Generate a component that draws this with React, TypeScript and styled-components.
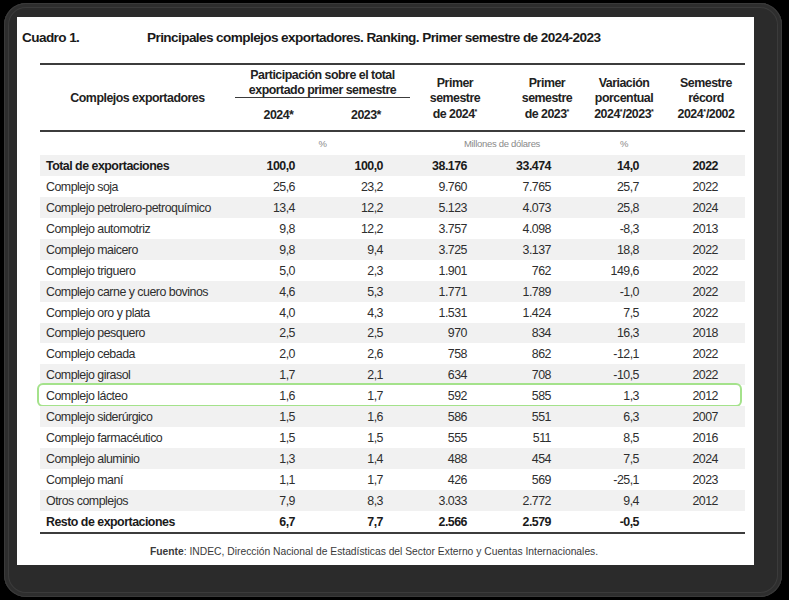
import React from "react";
import styled, { createGlobalStyle, css } from "styled-components";

const Global = createGlobalStyle`
  html, body { margin: 0; padding: 0; background: #000; }
  body { width: 789px; height: 600px; overflow: hidden; }
`;

const SANS = `"Liberation Sans", Arial, Helvetica, sans-serif`;
const COLS = "195px 87px 88px 90px 94px 60px 91px";

const Frame = styled.div`
  margin: 3px 0 0 4px;
  width: 778px;
  height: 594px;
  box-sizing: border-box;
  background: #2b2b2b;
  border-radius: 22px;
  box-shadow: inset 0 0 0 1px #3a3a3a, inset 0 0 0 4px #2e2e2e, inset 0 0 0 5px #3b3b3b;
  padding: 14px 0 0 13px;
`;

const Panel = styled.div`
  width: 737px;
  height: 548px;
  background: #fff;
  box-sizing: border-box;
  padding: 11px 9px 0 23px;
  font-family: ${SANS};
  color: #2a2a2a;
`;

const TitleRow = styled.div`
  display: flex;
  align-items: center;
  height: 18px;
  margin-left: -18px;
  font-size: 13.6px;
  letter-spacing: -0.6px;
  font-weight: 700;
  color: #1a1a1a;
`;

const TitleLabel = styled.span`
  width: 125px;
`;

const Table = styled.div`
  margin-top: 17px;
  width: 705px;
  border-top: 2px solid #3c3c3c;
  border-bottom: 2px solid #3c3c3c;
`;

const Head = styled.div`
  display: grid;
  grid-template-columns: ${COLS};
  grid-template-rows: 33px 32px;
  border-bottom: 2px solid #3c3c3c;
  font-size: 12.4px;
  letter-spacing: -0.5px;
  font-weight: 700;
  color: #222;
  line-height: 15.5px;
`;

const HeadCell = styled.div<{ $col: number; $row?: string; $span?: number; $shift?: number; $rule?: boolean }>`
  grid-column: ${(p) => p.$col} / span ${(p) => p.$span ?? 1};
  grid-row: ${(p) => p.$row ?? "1 / span 2"};
  display: flex;
  align-items: center;
  justify-content: center;
  padding-left: ${(p) => p.$shift ?? 0}px;
  padding-top: 3px;
  ${(p) =>
    p.$rule &&
    css`
      border-bottom: 1.5px solid #3c3c3c;
      padding-top: 4px;
    `}
`;

const HeadText = styled.div`
  text-align: center;
  white-space: nowrap;
  sup {
    font-size: 7px;
    line-height: 0;
    vertical-align: 4px;
    letter-spacing: 0;
  }
`;

const Units = styled.div`
  display: grid;
  grid-template-columns: ${COLS};
  height: 23px;
  align-items: center;
  font-size: 9.5px;
  letter-spacing: -0.3px;
  color: #8a8a8a;
`;

const UnitCell = styled.div<{ $col: number; $span?: number }>`
  grid-column: ${(p) => p.$col} / span ${(p) => p.$span ?? 1};
  text-align: center;
`;

const Row = styled.div<{ $shade: boolean; $bold?: boolean; $mark?: boolean }>`
  position: relative;
  display: grid;
  grid-template-columns: ${COLS};
  align-items: center;
  height: 20.95px;
  padding-top: 1px;
  box-sizing: border-box;
  font-size: 12.4px;
  letter-spacing: -0.5px;
  color: #2e2e2e;
  background: ${(p) => (p.$shade ? "#f1f1f1" : "#fff")};
  font-weight: ${(p) => (p.$bold ? 700 : 400)};
  ${(p) => p.$bold && css`color: #1a1a1a;`}
  ${(p) =>
    p.$mark &&
    css`
      &::after {
        content: "";
        position: absolute;
        left: -3px;
        right: 3px;
        top: -2px;
        bottom: -1px;
        border: 2px solid #a4e28b;
        border-radius: 6px;
        pointer-events: none;
      }
    `}
`;

const Name = styled.div`
  padding-left: 6px;
  white-space: nowrap;
`;

const Num = styled.div<{ $pr: number }>`
  text-align: right;
  padding-right: ${(p) => p.$pr}px;
  white-space: nowrap;
`;

const Footer = styled.div`
  margin-top: 12px;
  padding-left: 110px;
  font-size: 10.3px;
  color: #3a3a3a;
  b { font-weight: 700; }
`;

type R = [string, string, string, string, string, string, string, boolean?];

const rows: R[] = [
  ["Total de exportaciones", "100,0", "100,0", "38.176", "33.474", "14,0", "2022", true],
  ["Complejo soja", "25,6", "23,2", "9.760", "7.765", "25,7", "2022"],
  ["Complejo petrolero-petroquímico", "13,4", "12,2", "5.123", "4.073", "25,8", "2024"],
  ["Complejo automotriz", "9,8", "12,2", "3.757", "4.098", "-8,3", "2013"],
  ["Complejo maicero", "9,8", "9,4", "3.725", "3.137", "18,8", "2022"],
  ["Complejo triguero", "5,0", "2,3", "1.901", "762", "149,6", "2022"],
  ["Complejo carne y cuero bovinos", "4,6", "5,3", "1.771", "1.789", "-1,0", "2022"],
  ["Complejo oro y plata", "4,0", "4,3", "1.531", "1.424", "7,5", "2022"],
  ["Complejo pesquero", "2,5", "2,5", "970", "834", "16,3", "2018"],
  ["Complejo cebada", "2,0", "2,6", "758", "862", "-12,1", "2022"],
  ["Complejo girasol", "1,7", "2,1", "634", "708", "-10,5", "2022"],
  ["Complejo lácteo", "1,6", "1,7", "592", "585", "1,3", "2012"],
  ["Complejo siderúrgico", "1,5", "1,6", "586", "551", "6,3", "2007"],
  ["Complejo farmacéutico", "1,5", "1,5", "555", "511", "8,5", "2016"],
  ["Complejo aluminio", "1,3", "1,4", "488", "454", "7,5", "2024"],
  ["Complejo maní", "1,1", "1,7", "426", "569", "-25,1", "2023"],
  ["Otros complejos", "7,9", "8,3", "3.033", "2.772", "9,4", "2012"],
  ["Resto de exportaciones", "6,7", "7,7", "2.566", "2.579", "-0,5", "", true],
];

const PADS = [27, 27, 33, 43, 15, 27];

export default function App() {
  return (
    <>
      <Global />
      <Frame>
        <Panel>
          <TitleRow>
            <TitleLabel>Cuadro 1.</TitleLabel>
            <span>Principales complejos exportadores. Ranking. Primer semestre de 2024-2023</span>
          </TitleRow>
          <Table>
            <Head>
              <HeadCell $col={1} $shift={-2}>
                <HeadText>Complejos exportadores</HeadText>
              </HeadCell>
              <HeadCell $col={2} $span={2} $row="1" $rule>
                <HeadText>
                  Participación sobre el total
                  <br />
                  exportado primer semestre
                </HeadText>
              </HeadCell>
              <HeadCell $col={2} $row="2" $shift={-6}>
                <HeadText>2024*</HeadText>
              </HeadCell>
              <HeadCell $col={3} $row="2">
                <HeadText>2023*</HeadText>
              </HeadCell>
              <HeadCell $col={4}>
                <HeadText>
                  Primer
                  <br />
                  semestre
                  <br />
                  de 2024<sup>*</sup>
                </HeadText>
              </HeadCell>
              <HeadCell $col={5}>
                <HeadText>
                  Primer
                  <br />
                  semestre
                  <br />
                  de 2023<sup>*</sup>
                </HeadText>
              </HeadCell>
              <HeadCell $col={6}>
                <HeadText>
                  Variación
                  <br />
                  porcentual
                  <br />
                  2024<sup>*</sup>/2023<sup>*</sup>
                </HeadText>
              </HeadCell>
              <HeadCell $col={7} $shift={13}>
                <HeadText>
                  Semestre
                  <br />
                  récord
                  <br />
                  2024<sup>*</sup>/2002
                </HeadText>
              </HeadCell>
            </Head>
            <Units>
              <UnitCell $col={2} $span={2}>%</UnitCell>
              <UnitCell $col={4} $span={2}>Millones de dólares</UnitCell>
              <UnitCell $col={6}>%</UnitCell>
            </Units>
            {rows.map((r, i) => (
              <Row key={r[0]} $shade={i % 2 === 0} $bold={r[7]} $mark={r[0] === "Complejo lácteo"}>
                <Name>{r[0]}</Name>
                {r.slice(1, 7).map((v, j) => (
                  <Num key={j} $pr={PADS[j]}>
                    {v as string}
                  </Num>
                ))}
              </Row>
            ))}
          </Table>
          <Footer>
            <b>Fuente</b>: INDEC, Dirección Nacional de Estadísticas del Sector Externo y Cuentas Internacionales.
          </Footer>
        </Panel>
      </Frame>
    </>
  );
}
